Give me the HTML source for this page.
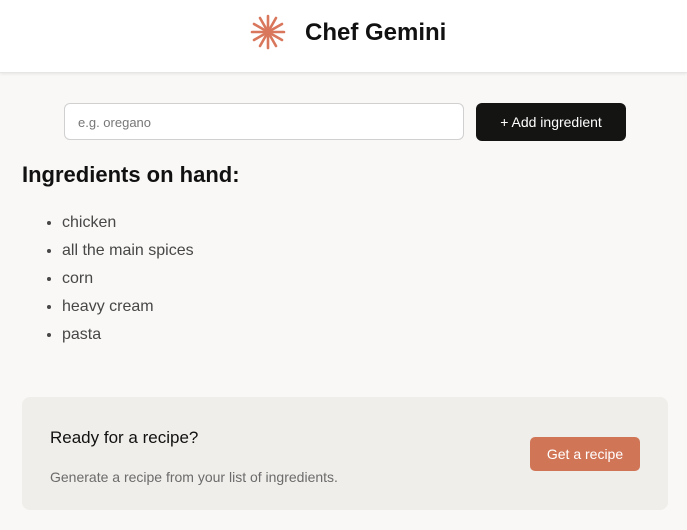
<!DOCTYPE html>
<html><head><style>
body{margin:0;width:687px;height:530px;background:#f9f8f6;font-family:"Liberation Sans",sans-serif;overflow:hidden;position:relative}
header{position:absolute;left:0;top:0;width:687px;height:72px;background:#fff;border-bottom:1px solid #e6e6e6;box-shadow:0 1px 3px rgba(0,0,0,.08)}
header h1{position:absolute;left:305px;top:19px;margin:0;font-size:24px;font-weight:bold;color:#111}
header svg{position:absolute;left:250px;top:14px}
.inp{position:absolute;left:64px;top:103px;width:400px;height:37px;border:1px solid #d0d0d0;border-radius:6px;background:#fff;box-sizing:border-box;font-size:13px;color:#777;padding:11px 0 0 13px}
.btn{position:absolute;left:476px;top:103px;width:150px;height:38px;background:#141413;border-radius:6px;color:#fff;font-size:14px;text-align:center;line-height:38px}
h2{position:absolute;left:22px;top:162px;margin:0;font-size:22px;font-weight:bold;color:#111}
ul{position:absolute;left:22px;top:213px;margin:0;padding-left:40px;color:#474747;font-size:16px}
li{height:28px;line-height:20px}
.card{position:absolute;left:22px;top:397px;width:646px;height:113px;background:#f0eeea;border-radius:8px}
.card h3{position:absolute;left:28px;top:31px;margin:0;font-size:17px;font-weight:normal;color:#111}
.card p{position:absolute;left:28px;top:72px;margin:0;font-size:14px;color:#6b6b6b}
.gr{position:absolute;left:508px;top:40px;width:110px;height:34px;background:#d17557;border-radius:5px;color:#fff;font-size:14px;text-align:center;line-height:34px}
</style></head><body>
<header>
<svg width="36" height="36" viewBox="-18 -18 36 36"><g stroke="#d9775c" stroke-width="2.6" stroke-linecap="round">
<line x1="0" y1="-16" x2="0" y2="16"/><line x1="-16" y1="0" x2="16" y2="0"/>
<line x1="-8" y1="-14" x2="8" y2="14"/><line x1="8" y1="-14" x2="-8" y2="14"/>
<line x1="-14" y1="-8" x2="14" y2="8"/><line x1="14" y1="-8" x2="-14" y2="8"/>
</g></svg>
<h1>Chef Gemini</h1></header>
<div class="inp">e.g. oregano</div>
<div class="btn">+ Add ingredient</div>
<h2>Ingredients on hand:</h2>
<ul><li>chicken</li><li>all the main spices</li><li>corn</li><li>heavy cream</li><li>pasta</li></ul>
<div class="card"><h3>Ready for a recipe?</h3><p>Generate a recipe from your list of ingredients.</p><div class="gr">Get a recipe</div></div>
</body></html>
